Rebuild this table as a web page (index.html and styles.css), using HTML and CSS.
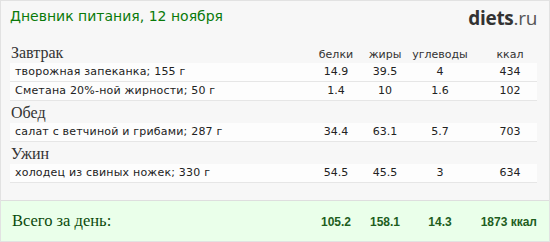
FILE: index.html
```html
<!DOCTYPE html>
<html lang="ru">
<head>
<meta charset="utf-8">
<title>Дневник питания</title>
<link rel="stylesheet" href="styles.css">
</head>
<body>
<div class="card">
  <div class="top">
    <h1 class="title">Дневник питания, 12 ноября</h1>
    <div class="logo"><span class="logo-main">diets</span><span class="logo-ru">.ru</span></div>
  </div>

  <div class="meal">
    <div class="grid head">
      <div class="meal-name">Завтрак</div>
      <div class="lbl">белки</div>
      <div class="lbl">жиры</div>
      <div class="lbl">углеводы</div>
      <div class="lbl last">ккал</div>
    </div>
    <div class="grid row">
      <div class="name">творожная запеканка; 155 г</div>
      <div class="num">14.9</div><div class="num">39.5</div><div class="num">4</div><div class="num last">434</div>
    </div>
    <div class="grid row">
      <div class="name">Сметана 20%-ной жирности; 50 г</div>
      <div class="num">1.4</div><div class="num">10</div><div class="num">1.6</div><div class="num last">102</div>
    </div>
  </div>

  <div class="meal">
    <div class="grid head">
      <div class="meal-name">Обед</div>
    </div>
    <div class="grid row">
      <div class="name">салат с ветчиной и грибами; 287 г</div>
      <div class="num">34.4</div><div class="num">63.1</div><div class="num">5.7</div><div class="num last">703</div>
    </div>
  </div>

  <div class="meal">
    <div class="grid head">
      <div class="meal-name">Ужин</div>
    </div>
    <div class="grid row">
      <div class="name">холодец из свиных ножек; 330 г</div>
      <div class="num">54.5</div><div class="num">45.5</div><div class="num">3</div><div class="num last">634</div>
    </div>
  </div>

  <div class="total">
    <div class="grid total-row">
      <div class="total-label">Всего за день:</div>
      <div class="tnum">105.2</div><div class="tnum">158.1</div><div class="tnum">14.3</div><div class="tnum tlast">1873 ккал</div>
    </div>
  </div>
</div>
</body>
</html>
```
FILE: styles.css
```css
html, body {
  margin: 0;
  padding: 0;
  background: #f7f7f7;
}
.card {
  width: 550px;
  height: 242px;
  box-sizing: border-box;
  border: 1px solid #e2e2e2;
  background: #f7f7f7;
  display: flex;
  flex-direction: column;
}
.top {
  display: flex;
  justify-content: space-between;
  align-items: flex-start;
  height: 40px;
  padding: 0 12px 0 9px;
}
.title {
  margin: 5px 0 0;
  font: normal 14px/20px "DejaVu Sans", Verdana, sans-serif;
  color: #0a7a0a;
}
.logo {
  margin-top: 4px;
  font-family: "Open Sans", sans-serif;
  font-size: 19px;
  line-height: 26px;
  letter-spacing: -0.3px;
}
.logo-main { font-weight: 700; color: #333; }
.logo-ru { font-weight: 400; color: #555; }

.meal { padding: 0 12px 0 9px; }
.grid {
  display: grid;
  grid-template-columns: 1fr 50px 48px 62px 66px;
  align-items: baseline;
}
.head { height: 22px; }
.meal-name {
  font: 16px/23px "Liberation Serif", serif;
  color: #333;
  padding-left: 1px;
}
.lbl {
  font: 11px/23px "DejaVu Sans", Verdana, sans-serif;
  color: #333;
  text-align: center;
}
.last { padding-left: 12px; }
.row {
  height: 18px;
  background: #fdfdfd;
  border-bottom: 1px solid #e6e6e6;
  font: 11px/18px "DejaVu Sans", Verdana, sans-serif;
  color: #222;
}
.name { padding-left: 5px; letter-spacing: 0.2px; }
.num { text-align: center; }

.total {
  margin-top: auto;
  height: 40px;
  background: #eaffea;
  border-top: 1px solid #dedede;
  padding: 0 12px 0 9px;
  display: flex;
  align-items: center;
}
.total-row { width: 100%; }
.total-label {
  font: 16.5px/20px "Liberation Serif", serif;
  color: #0a4a0a;
  padding-left: 2px;
}
.tnum {
  font: bold 12px/20px "Liberation Sans", Arial, sans-serif;
  color: #1e5e1e;
  text-align: center;
}
.tlast { text-align: right; }
```
